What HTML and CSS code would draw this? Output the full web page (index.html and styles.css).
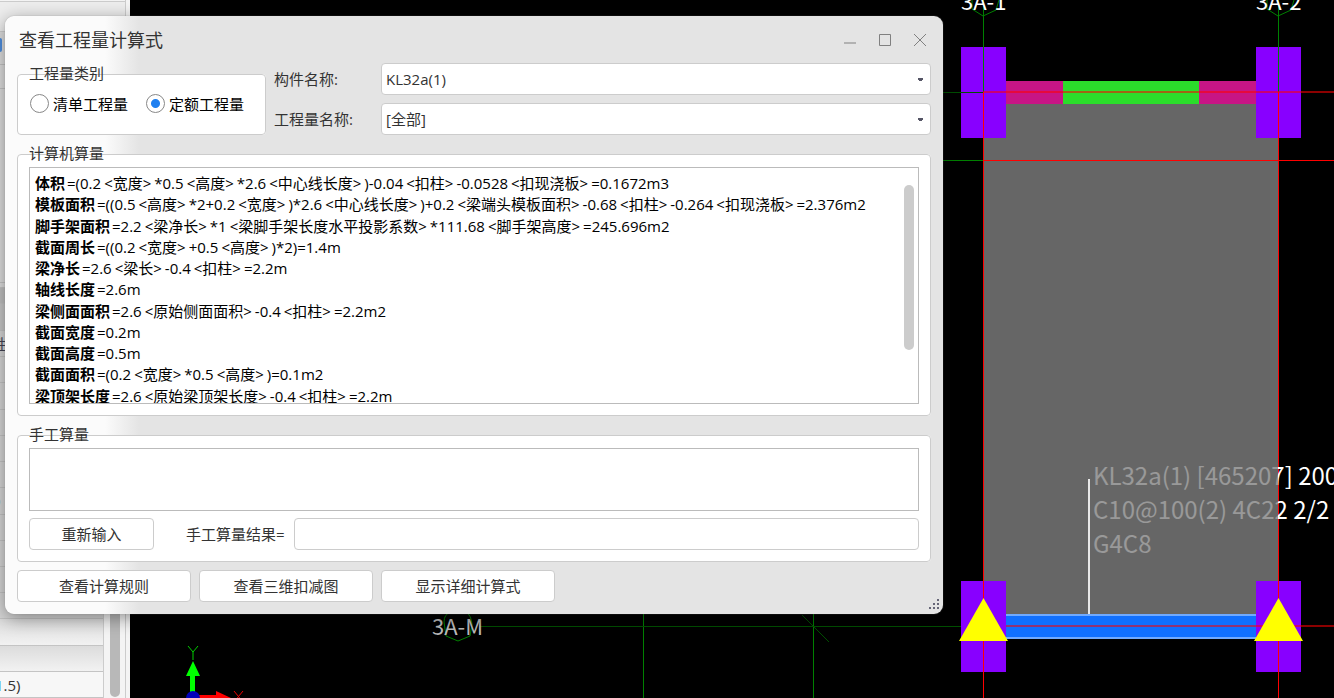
FILE: index.html
```html
<!DOCTYPE html>
<html lang="zh-CN">
<head>
<meta charset="utf-8">
<title>查看工程量计算式</title>
<link rel="stylesheet" href="styles.css">
</head>
<body>
<main class="workspace">
  <aside class="panel">
    <div class="panel-inner">
      <div class="panel-top"></div>
      <div class="panel-main">
        <div class="panel-body">
          <div class="cell search"><span class="chip"></span></div>
          <div class="cell filter"></div>
          <div class="cell blank"></div>
          <div class="cell gap"></div>
          <div class="cell head"></div>
          <div class="cell head2"></div>
          <div class="cell row label">性</div>
          <div class="cell row"></div>
          <div class="cell row"></div>
          <div class="cell row"></div>
          <div class="cell row"></div>
          <div class="cell row"></div>
          <div class="cell row label">0</div>
          <div class="cell row"></div>
          <div class="cell row"></div>
          <div class="cell row"></div>
          <div class="cell row"></div>
          <div class="cell row low"></div>
          <div class="cell row low"></div>
          <div class="cell row value"><span class="blue">1</span>.5)</div>
        </div>
        <div class="panel-scroll"><span class="panel-thumb"></span></div>
      </div>
    </div>
  </aside>
  <svg class="canvas" role="img" aria-label="梁平面图">
    <defs>
      <linearGradient id="note-ink" gradientUnits="userSpaceOnUse" x1="1147" y1="0" x2="1149" y2="0">
        <stop offset="0.5" stop-color="#999"/>
        <stop offset="0.5" stop-color="#fff"/>
      </linearGradient>
    </defs>
    <rect class="slab" x="853" y="104" width="295" height="510"/>
    <g class="axis">
      <path d="M853.500 14V47M1148.500 14V47M800 160.500H853M513.500 600V698M683.500 600V698"/>
      <path class="dim" d="M350 626.500H853M800 92.500H831M672 615L699 642"/>
      <path d="M842 0V9L853 16L866 10L869 0M1137 0V9L1148 16L1161 10L1164 0M853.500 0V14M1148.500 0V14"/>
      <path d="M314 622Q314 614 321 612M314 622L316 636L328 641L340 636L342 624Q341 615 336 612"/>
    </g>
    <g class="column">
      <rect x="831" y="47" width="45" height="91"/>
      <rect x="1126" y="47" width="45" height="91"/>
      <rect x="831" y="581" width="45" height="91"/>
      <rect x="1126" y="581" width="45" height="91"/>
    </g>
    <path class="axis" d="M853.500 47V92M1148.500 47V92"/>
    <path class="axis dim" d="M831 92.500H853"/>
    <rect class="beam-end" x="876" y="81" width="250" height="23"/>
    <rect class="beam-mid" x="933" y="81" width="136" height="23"/>
    <rect class="beam-edge" x="876" y="614" width="250" height="25"/>
    <rect class="beam-selected" x="876" y="616" width="250" height="21"/>
    <g class="grid">
      <path d="M853 160.500H1204M853.500 92V698M1148.500 92V698"/>
      <path class="soft" d="M853 92H1204M876 626H1204"/>
    </g>
    <g class="support">
      <path d="M853.500 598L878 641H829Z"/>
      <path d="M1148.500 598L1173 641H1124Z"/>
    </g>
    <path class="leader" d="M959 479V614"/>
    <g class="note">
      <text x="963" y="485">KL32a(1) [465207] 200</text>
      <text x="963" y="519">C10@100(2) 4C22 2/2</text>
      <text x="963" y="553">G4C8</text>
    </g>
    <g class="axis-name">
      <text x="831" y="10">3A-1</text>
      <text x="1126" y="10">3A-2</text>
      <text class="muted" x="302" y="635">3A-M</text>
    </g>
    <g class="ucs">
      <path class="y" d="M60 698V676H56L63 661L70 676H65V698Z"/>
      <path class="y-name" d="M58 646L63 652L68 646M63 652V660"/>
      <path class="x" d="M66 695H86V691L101 698H66Z"/>
      <path class="x-name" d="M104 691L113 702M113 691L104 702"/>
      <circle cx="63" cy="698" r="7"/>
    </g>
  </svg>
</main>

<section class="dialog" role="dialog" aria-labelledby="dialog-title">
  <header class="titlebar">
    <h1 id="dialog-title">查看工程量计算式</h1>
    <div class="window-buttons">
      <button type="button" aria-label="最小化"><svg width="14" height="14"><path d="M1 10H13"/></svg></button>
      <button type="button" aria-label="最大化"><svg width="14" height="14"><path d="M1.500 1.500H12.500V12.500H1.500Z"/></svg></button>
      <button type="button" aria-label="关闭"><svg width="14" height="14"><path d="M1 1L13 13M13 1L1 13"/></svg></button>
    </div>
  </header>

  <div class="top">
    <fieldset class="group kind">
      <legend>工程量类别</legend>
      <label class="radio"><input type="radio" name="kind"><span>清单工程量</span></label>
      <label class="radio"><input type="radio" name="kind" checked><span>定额工程量</span></label>
    </fieldset>
    <div class="fields">
      <label for="member">构件名称:</label>
      <select id="member"><option>KL32a(1)</option></select>
      <label for="quantity">工程量名称:</label>
      <select id="quantity"><option>[全部]</option></select>
    </div>
  </div>

  <fieldset class="group computed">
    <legend>计算机算量</legend>
    <div class="log">
      <div class="lines">
        <p><b>体积</b>=(0.2<i>&lt;宽度&gt;</i>*0.5<i>&lt;高度&gt;</i>*2.6<i>&lt;中心线长度&gt;</i>)-0.04<i>&lt;扣柱&gt;</i>-0.0528<i>&lt;扣现浇板&gt;</i>=0.1672m3</p>
        <p><b>模板面积</b>=((0.5<i>&lt;高度&gt;</i>*2+0.2<i>&lt;宽度&gt;</i>)*2.6<i>&lt;中心线长度&gt;</i>)+0.2<i>&lt;梁端头模板面积&gt;</i>-0.68<i>&lt;扣柱&gt;</i>-0.264<i>&lt;扣现浇板&gt;</i>=2.376m2</p>
        <p><b>脚手架面积</b>=2.2<i>&lt;梁净长&gt;</i>*1<i>&lt;梁脚手架长度水平投影系数&gt;</i>*111.68<i>&lt;脚手架高度&gt;</i>=245.696m2</p>
        <p><b>截面周长</b>=((0.2<i>&lt;宽度&gt;</i>+0.5<i>&lt;高度&gt;</i>)*2)=1.4m</p>
        <p><b>梁净长</b>=2.6<i>&lt;梁长&gt;</i>-0.4<i>&lt;扣柱&gt;</i>=2.2m</p>
        <p><b>轴线长度</b>=2.6m</p>
        <p><b>梁侧面面积</b>=2.6<i>&lt;原始侧面面积&gt;</i>-0.4<i>&lt;扣柱&gt;</i>=2.2m2</p>
        <p><b>截面宽度</b>=0.2m</p>
        <p><b>截面高度</b>=0.5m</p>
        <p><b>截面面积</b>=(0.2<i>&lt;宽度&gt;</i>*0.5<i>&lt;高度&gt;</i>)=0.1m2</p>
        <p><b>梁顶架长度</b>=2.6<i>&lt;原始梁顶架长度&gt;</i>-0.4<i>&lt;扣柱&gt;</i>=2.2m</p>
      </div>
      <div class="log-scroll"><span class="log-thumb"></span></div>
    </div>
  </fieldset>

  <fieldset class="group manual">
    <legend>手工算量</legend>
    <textarea aria-label="手工算量"></textarea>
    <div class="manual-row">
      <button type="button" class="btn">重新输入</button>
      <label for="result">手工算量结果=</label>
      <input id="result" type="text">
    </div>
  </fieldset>

  <footer class="actions">
    <button type="button" class="btn">查看计算规则</button>
    <button type="button" class="btn">查看三维扣减图</button>
    <button type="button" class="btn">显示详细计算式</button>
  </footer>
  <svg class="grip" width="11" height="11" aria-hidden="true"><path d="M8 0h2v2h-2zM4 4h2v2h-2zM8 4h2v2h-2zM0 8h2v2h-2zM4 8h2v2h-2zM8 8h2v2h-2z"/></svg>
</section>
</body>
</html>
```
FILE: styles.css
```css
* { box-sizing: border-box; }
html, body { height: 100%; }
body {
  margin: 0;
  overflow: hidden;
  background: #000;
  color: #333;
  font: 15px/20px "Open Sans", "Noto Sans CJK SC", sans-serif;
}
button, input, select, textarea { font: inherit; color: inherit; }

.workspace { display: flex; height: 100%; }

/* property panel behind the dialog */
.panel {
  flex: 0 0 130px;
  height: 100%;
  overflow: hidden;
  padding-right: 4px;
  background: #f4f4f4;
}
.panel-inner { display: flex; flex-direction: column; height: 100%; border-right: 1px solid #ccc; }
.panel-top { flex: 0 0 31px; margin-top: 1px; border-top: 1px solid #ccc; border-bottom: 1px solid #ccc; background: #ededed; }
.panel-main { flex: 1; min-height: 0; display: flex; }
.panel-body { flex: 0 0 104px; display: flex; flex-direction: column; border-right: 1px solid #ccc; }
.cell {
  flex: none;
  border-bottom: 1px solid #c4c4c4;
  background: #dedede;
}
.cell.search { height: 33px; }
.cell.filter { height: 24px; }
.cell.blank { height: 194px; }
.cell.gap { height: 5px; }
.cell.head { height: 16px; background: #c0c0c0; }
.cell.head2 { height: 27px; background: #c8c8c8; }
.cell.row { flex: 1; min-height: 0; background: #d6d6d6; line-height: 26px; white-space: nowrap; }
.cell.label { text-indent: -8px; color: #445; }
.cell.low { background: linear-gradient(#dcdcdc, #f2f2f2); }
.cell.value { background: #f7f7f7; text-indent: -5px; }
.blue { color: #3d8be8; }
.chip { display: block; width: 2px; height: 14px; margin-top: 6px; background: #4f8fe0; border-radius: 0 2px 2px 0; }
.panel-scroll { flex: 1; display: flex; padding: 300px 5px 1px 6px; }
.panel-thumb { flex: 1; border-radius: 5px; background: #b8b8b8; }

/* drawing canvas */
.canvas { flex: 1; min-width: 0; height: 100%; background: #000; }
.slab { fill: #666; }
.axis { fill: none; stroke: #008000; }
.dim { stroke: #004f00; }
.column { fill: #80f; }
.beam-end { fill: #c71585; }
.beam-mid { fill: #2bdd2b; }
.beam-edge { fill: #70aaff; }
.beam-selected { fill: #1070ff; }
.grid { fill: none; stroke: #f00; }
.soft { stroke-opacity: 0.55; stroke-width: 2; }
.support { fill: #ff0; }
.leader { stroke: #e8e8e8; stroke-width: 2; }
.note, .axis-name { font-family: "Noto Sans CJK SC", sans-serif; }
.note { font-size: 24px; fill: url(#note-ink); }
.axis-name { font-size: 22px; fill: #fff; }
.muted { fill: #bbb; }
.y { fill: #0f0; }
.y-name { fill: none; stroke: #0c0; }
.x { fill: #f00; }
.x-name { fill: none; stroke: #e00; }
.ucs circle { fill: #00b; }

/* dialog window */
.dialog {
  position: absolute;
  left: 5px;
  top: 16px;
  width: 938px;
  padding: 0 12px 12px;
  border-radius: 9px;
  background: linear-gradient(90deg, #fbfbfb 0, #fbfbfb 100px, #e4e4e4 134px);
  box-shadow: 0 0 1px #888, 0 4px 18px rgba(0, 0, 0, 0.4);
}
.titlebar { display: flex; align-items: center; justify-content: space-between; height: 47px; padding: 0 4px 0 2px; }
h1 { margin: 0; font-size: 18px; font-weight: 400; line-height: 24px; }
.window-buttons { display: flex; gap: 21px; }
.window-buttons button { width: 14px; height: 14px; padding: 0; border: 0; background: none; }
.window-buttons svg { display: block; fill: none; stroke: #808080; }

.top { display: flex; gap: 8px; }
.group {
  position: relative;
  min-width: 0;
  margin: 0;
  border: 1px solid #ccc;
  border-radius: 4px;
  background: #fff;
}
legend {
  position: absolute;
  left: 11px;
  top: -12px;
  padding: 0;
}
.kind { display: flex; align-items: center; gap: 18px; width: 249px; height: 61px; margin-top: 11px; padding: 0 12px 2px; }
.radio { display: flex; align-items: center; gap: 4px; color: #000; }
.radio input {
  appearance: none;
  width: 19px;
  height: 19px;
  margin: 0;
  border: 1px solid #888;
  border-radius: 50%;
  background: #fff;
}
.radio input:checked { background: radial-gradient(circle, #2080f0 0, #2080f0 4px, #fff 5px); }
.fields { flex: 1; display: grid; grid-template-columns: 100px 1fr; row-gap: 8px; column-gap: 7px; align-items: center; align-self: start; }
select, input[type="text"], .btn {
  height: 32px;
  border: 1px solid #ccc;
  border-radius: 4px;
  background: #fff;
}
select {
  appearance: none;
  width: 100%;
  padding: 0 20px 0 4px;
  background: linear-gradient(#556, #556) right 7px top 14px / 5px 2px no-repeat, linear-gradient(#556, #556) right 8px top 16px / 3px 1px no-repeat, #fff;
}

.computed { margin-top: 19px; padding: 12px 11px 11px; }
.log { display: flex; align-items: flex-start; height: 237px; border: 1px solid #bbb; background: #fff; overflow: hidden; }
.lines { flex: 1; display: grid; height: 239px; padding: 5px 0 0 5px; color: #000; grid-auto-rows: 1fr; }
.lines p { margin: 0; white-space: nowrap; }
.lines b { padding-right: 2px; }
.lines i { padding: 0 3px; font-style: normal; }
.log-scroll { flex: 0 0 14px; padding-top: 17px; }
.log-thumb { display: block; width: 10px; height: 165px; border-radius: 5px; background: #ccc; }

.manual { margin-top: 19px; padding: 12px 11px 11px; }
textarea { display: block; width: 100%; height: 63px; border: 1px solid #bbb; border-radius: 0; resize: none; background: #fff; }
.manual-row { display: flex; align-items: center; margin-top: 7px; }
.manual-row .btn { width: 125px; }
.manual-row label { margin: 0 9px 0 32px; }
.manual-row input { flex: 1; min-width: 0; }

.actions { display: flex; gap: 8px; margin-top: 8px; }
.actions .btn { width: 174px; }
.grip { position: absolute; right: 3px; bottom: 4px; fill: #667; }
```
